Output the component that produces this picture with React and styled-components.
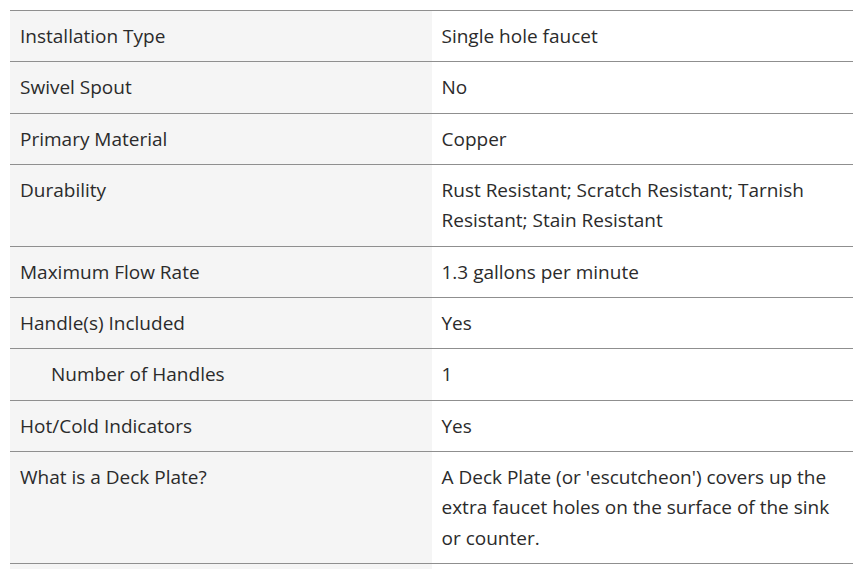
import React from "react";
import styled, { createGlobalStyle } from "styled-components";

const Global = createGlobalStyle`
  body {
    margin: 0;
    background: #fff;
    font-family: "Open Sans", Lato, sans-serif;
    color: #2b2b2b;
  }
`;

const Wrap = styled.div`
  padding: 10px 15px 0 10px;
`;

const Table = styled.div`
  display: grid;
  grid-template-columns: 1fr 1fr;
  border-top: 1px solid #8f8f8f;
`;

const Label = styled.div`
  background: #f5f5f5;
  padding: 10px 10px 10px ${(p) => (p.$indent ? "41px" : "10px")};
  font-size: 19px;
  line-height: 30.33px;
  border-bottom: 1px solid #8f8f8f;
`;

const Value = styled.div`
  padding: 10px;
  font-size: 19px;
  line-height: 30.33px;
  border-bottom: 1px solid #8f8f8f;
`;

const specs = [
  ["Installation Type", "Single hole faucet"],
  ["Swivel Spout", "No"],
  ["Primary Material", "Copper"],
  ["Durability", "Rust Resistant; Scratch Resistant; Tarnish Resistant; Stain Resistant"],
  ["Maximum Flow Rate", "1.3 gallons per minute"],
  ["Handle(s) Included", "Yes"],
  ["Number of Handles", "1", true],
  ["Hot/Cold Indicators", "Yes"],
  [
    "What is a Deck Plate?",
    "A Deck Plate (or 'escutcheon') covers up the extra faucet holes on the surface of the sink or counter.",
  ],
  ["", ""],
];

export default function App() {
  return (
    <Wrap>
      <Global />
      <Table>
        {specs.map(([k, v, indent], i) => (
          <React.Fragment key={i}>
            <Label $indent={indent}>{k}</Label>
            <Value>{v}</Value>
          </React.Fragment>
        ))}
      </Table>
    </Wrap>
  );
}
